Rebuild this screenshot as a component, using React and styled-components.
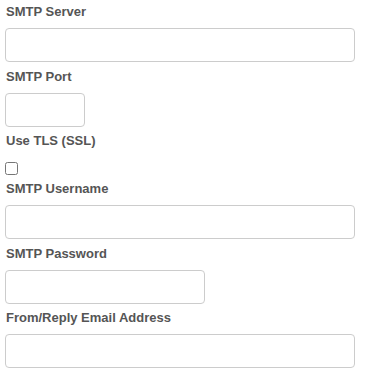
import React from "react";
import styled, { createGlobalStyle } from "styled-components";

const Global = createGlobalStyle`
  html, body { margin: 0; padding: 0; background: #fff; }
  body { font-family: "Liberation Sans", Arial, sans-serif; }
`;

const Form = styled.form`
  display: flex;
  flex-direction: column;
  align-items: flex-start;
  padding: 4px 5px 0 5px;
`;

const Label = styled.label`
  display: block;
  font-family: "Liberation Sans", Arial, sans-serif;
  font-size: 13px;
  line-height: 15px;
  font-weight: bold;
  color: #555;
  padding-left: 1px;
  margin-bottom: 9px;
`;

const Input = styled.input`
  box-sizing: border-box;
  width: ${(p) => p.$w}px;
  height: 34px;
  margin: 0 0 6.5px 0;
  padding: 6px 12px;
  border: 1px solid #ccc;
  border-radius: 4px;
  background: #fff;
  font-family: "Liberation Sans", Arial, sans-serif;
  font-size: 14px;
  color: #555;
  outline: none;
`;

const Check = styled.input`
  width: 13px;
  height: 13px;
  margin: 5px 0 6px 0;
`;

const fields = [
  { label: "SMTP Server", w: 350 },
  { label: "SMTP Port", w: 80 },
  { label: "Use TLS (SSL)", check: true },
  { label: "SMTP Username", w: 350 },
  { label: "SMTP Password", w: 200, type: "password" },
  { label: "From/Reply Email Address", w: 350 },
];

export default function App() {
  return (
    <>
      <Global />
      <Form onSubmit={(e) => e.preventDefault()}>
        {fields.map((f) => (
          <React.Fragment key={f.label}>
            <Label>{f.label}</Label>
            {f.check ? (
              <Check type="checkbox" />
            ) : (
              <Input $w={f.w} type={f.type || "text"} />
            )}
          </React.Fragment>
        ))}
      </Form>
    </>
  );
}
